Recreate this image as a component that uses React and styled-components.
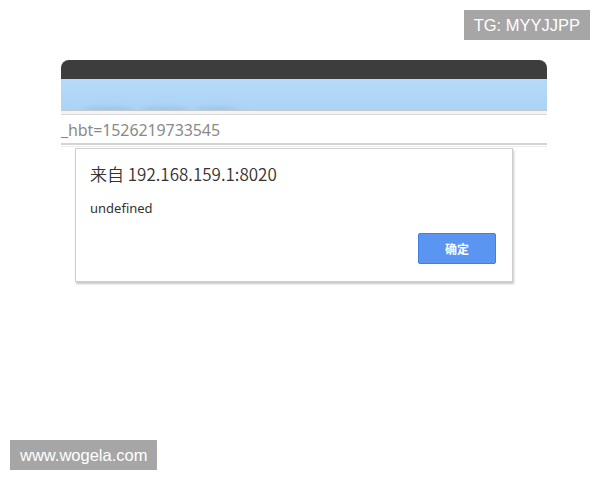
import styled, { createGlobalStyle } from 'styled-components';

const GlobalStyle = createGlobalStyle`
  html, body {
    margin: 0;
    padding: 0;
    background: #ffffff;
  }
  body {
    font-family: "Noto Sans", "Noto Sans CJK SC", sans-serif;
  }
`;

const Page = styled.div`
  position: relative;
  width: 600px;
  height: 480px;
  padding-top: 60px;
  box-sizing: border-box;
  overflow: hidden;
  background: #ffffff;
`;

const Watermark = styled.div`
  position: absolute;
  ${p => (p.$corner === 'top' ? 'top: 10px; right: 10px;' : 'bottom: 10px; left: 10px;')}
  height: 30px;
  padding: 0 10px;
  display: flex;
  align-items: center;
  background: #a6a6a6;
  color: #ffffff;
  font-family: "Liberation Sans", Arial, sans-serif;
  font-size: 16.5px;
`;

const BrowserWindow = styled.div`
  position: relative;
  margin-left: 61px;
  width: 486px;
`;

const TitleBar = styled.div`
  height: 19px;
  background: #3d3d3d;
  border-radius: 8px 8px 0 0;
`;

const TabStrip = styled.div`
  height: 31px;
  padding-left: 22px;
  display: flex;
  align-items: flex-end;
  gap: 6px;
  background: linear-gradient(#b6daf9, #acd3f5);
  border-bottom: 1px solid #c4c9cf;
  overflow: hidden;
`;

/* faint tab shapes melting into the blue strip */
const TabSmudge = styled.span`
  width: ${p => p.$w}px;
  height: 5px;
  margin-bottom: -2px;
  border-radius: 50%;
  background: rgba(120, 150, 180, 0.25);
  filter: blur(2px);
`;

const ToolbarEdge = styled.div`
  height: 3px;
  background: #f4f4f4;
  border-bottom: 1px solid #d8d8d8;
`;

const AddressRow = styled.div`
  height: 28px;
  padding-top: 2px;
  box-sizing: border-box;
  display: flex;
  align-items: center;
  color: #8a8a8a;
  font-family: "Noto Sans", sans-serif;
  font-size: 16px;
  letter-spacing: -0.1px;
`;

const ContentEdge = styled.div`
  height: 1px;
  border-top: 2px solid #d4d4d4;
  border-bottom: 1px solid #ececec;
`;

const AlertBox = styled.div`
  position: absolute;
  top: 88px;
  left: 14px;
  width: 438px;
  height: 134px;
  box-sizing: border-box;
  padding: 13px 16px 0 14px;
  background: #ffffff;
  border: 1px solid #cfcfcf;
  box-shadow: 1px 2px 2px rgba(0, 0, 0, 0.22);
  display: flex;
  flex-direction: column;
`;

const AlertTitle = styled.div`
  color: #333333;
  font-family: "Noto Sans CJK SC", "Noto Sans", sans-serif;
  font-size: 17px;
  font-weight: 350;
  line-height: 24px;
`;

const AlertMessage = styled.div`
  margin-top: 13px;
  color: #333333;
  font-family: "Noto Sans", "Noto Sans CJK SC", sans-serif;
  font-size: 13px;
  line-height: 18px;
`;

const ButtonRow = styled.div`
  margin-top: 16px;
  display: flex;
  justify-content: flex-end;
`;

const ConfirmButton = styled.button`
  width: 78px;
  height: 31px;
  border: 1px solid #3f7fe0;
  border-radius: 2px;
  background: #5b95f2;
  color: #ffffff;
  font-family: "Noto Sans CJK SC", sans-serif;
  font-size: 12px;
  font-weight: 700;
  cursor: pointer;
`;

const App = () => (
  <Page>
    <GlobalStyle />
    <BrowserWindow>
      <TitleBar />
      <TabStrip>
        <TabSmudge $w={52} />
        <TabSmudge $w={48} />
        <TabSmudge $w={44} />
      </TabStrip>
      <ToolbarEdge />
      <AddressRow>_hbt=1526219733545</AddressRow>
      <ContentEdge />
      <AlertBox>
        <AlertTitle>来自 192.168.159.1:8020</AlertTitle>
        <AlertMessage>undefined</AlertMessage>
        <ButtonRow>
          <ConfirmButton type="button">确定</ConfirmButton>
        </ButtonRow>
      </AlertBox>
    </BrowserWindow>
    <Watermark $corner="top">TG: MYYJJPP</Watermark>
    <Watermark $corner="bottom">www.wogela.com</Watermark>
  </Page>
);

export default App;
